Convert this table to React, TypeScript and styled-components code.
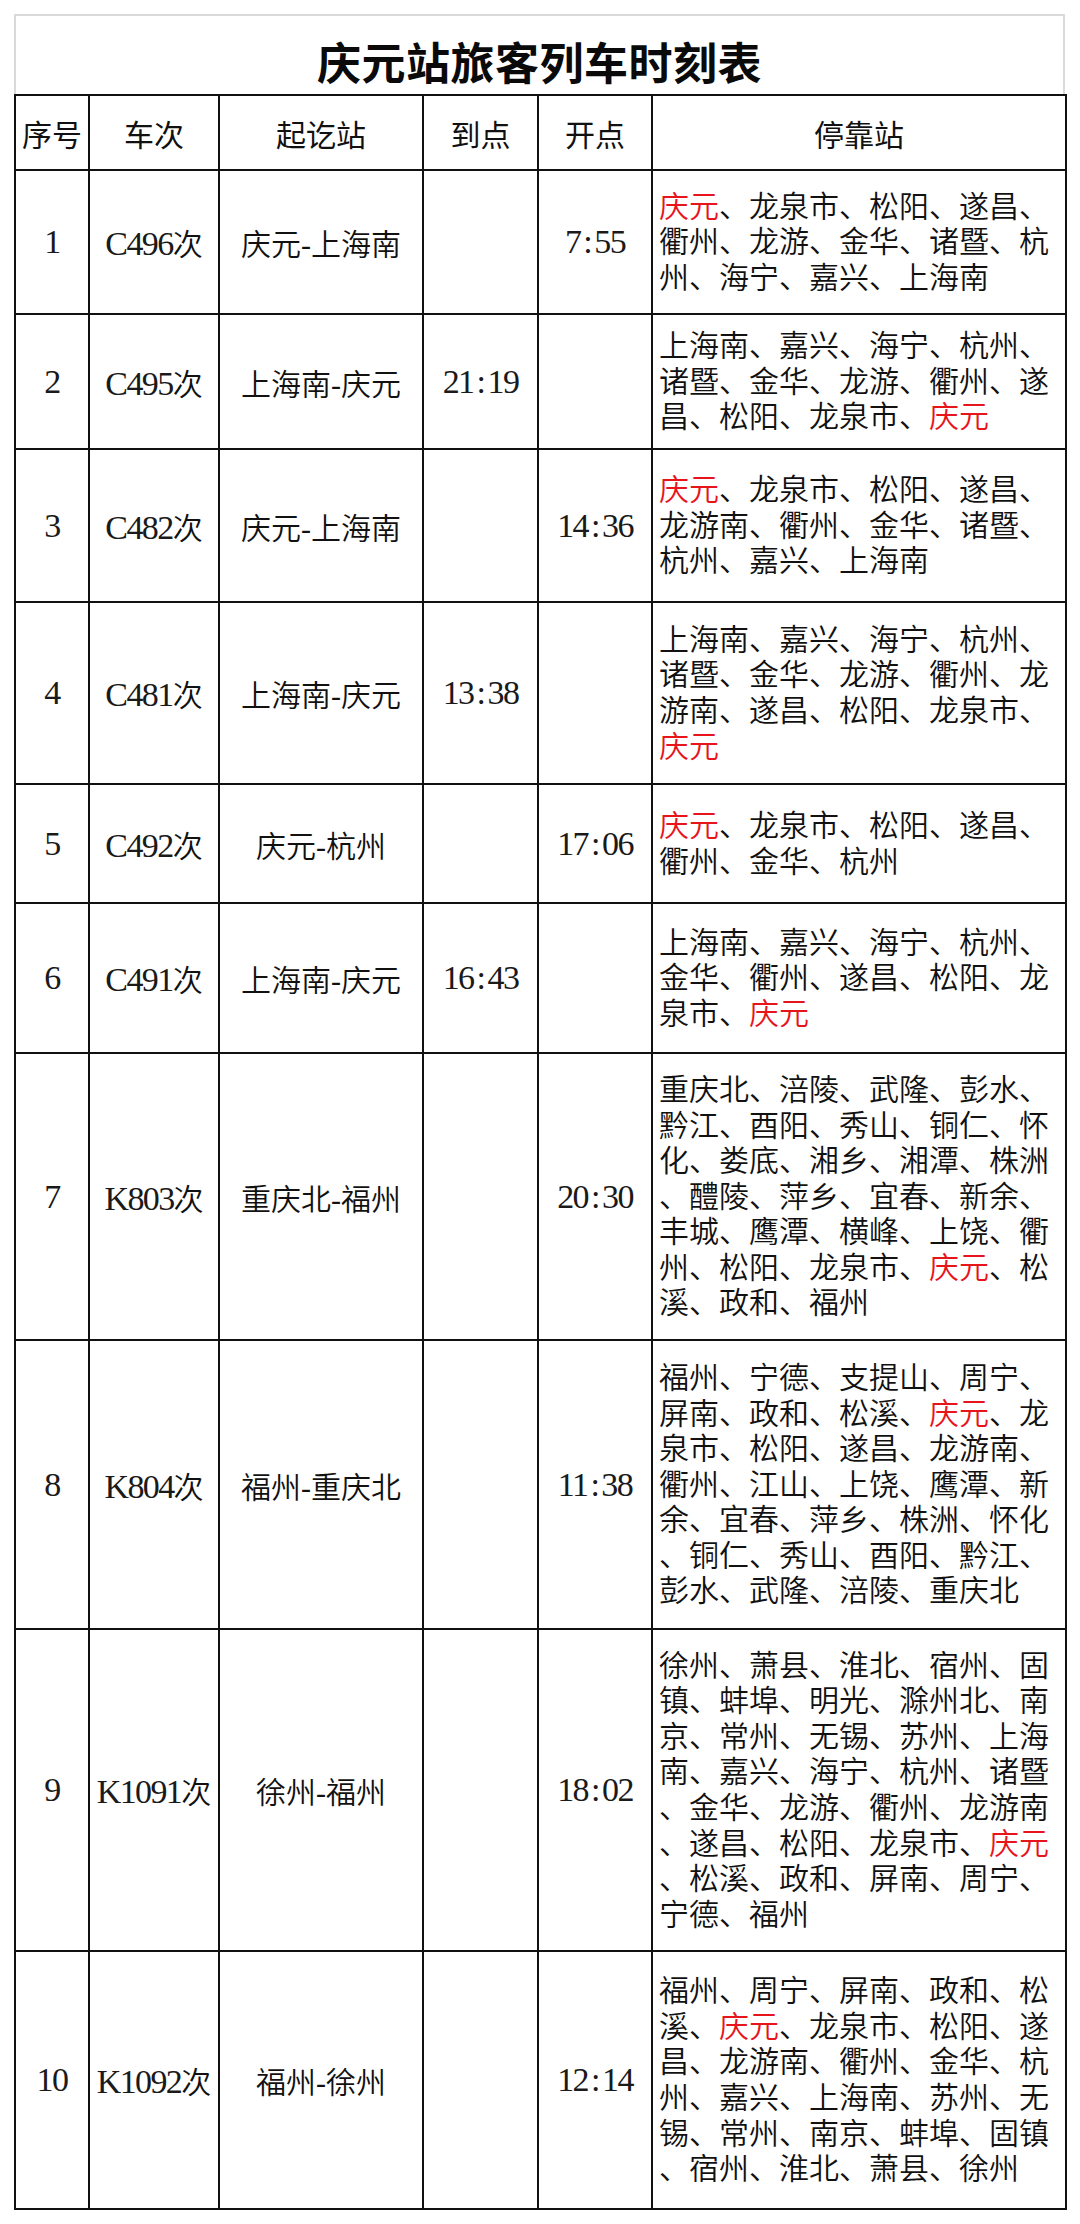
import React from 'react';
import styled, { createGlobalStyle } from 'styled-components';

const GlobalStyle = createGlobalStyle`
  html, body {
    margin: 0;
    padding: 0;
    background: #ffffff;
  }
  body {
    font-family: "Liberation Serif", "Noto Sans CJK SC", serif;
    color: #111111;
  }
`;

type Train = {
  no: number;
  code: string;
  route: string;
  arrive: string;
  depart: string;
  stops: string[];
  height: number;
};

const trains: Train[] = [
  {
    no: 1, code: 'C496', route: '庆元-上海南', arrive: '', depart: '7:55', height: 144,
    stops: ['庆元、龙泉市、松阳、遂昌、', '衢州、龙游、金华、诸暨、杭', '州、海宁、嘉兴、上海南'],
  },
  {
    no: 2, code: 'C495', route: '上海南-庆元', arrive: '21:19', depart: '', height: 135,
    stops: ['上海南、嘉兴、海宁、杭州、', '诸暨、金华、龙游、衢州、遂', '昌、松阳、龙泉市、庆元'],
  },
  {
    no: 3, code: 'C482', route: '庆元-上海南', arrive: '', depart: '14:36', height: 153,
    stops: ['庆元、龙泉市、松阳、遂昌、', '龙游南、衢州、金华、诸暨、', '杭州、嘉兴、上海南'],
  },
  {
    no: 4, code: 'C481', route: '上海南-庆元', arrive: '13:38', depart: '', height: 182,
    stops: ['上海南、嘉兴、海宁、杭州、', '诸暨、金华、龙游、衢州、龙', '游南、遂昌、松阳、龙泉市、', '庆元'],
  },
  {
    no: 5, code: 'C492', route: '庆元-杭州', arrive: '', depart: '17:06', height: 119,
    stops: ['庆元、龙泉市、松阳、遂昌、', '衢州、金华、杭州'],
  },
  {
    no: 6, code: 'C491', route: '上海南-庆元', arrive: '16:43', depart: '', height: 150,
    stops: ['上海南、嘉兴、海宁、杭州、', '金华、衢州、遂昌、松阳、龙', '泉市、庆元'],
  },
  {
    no: 7, code: 'K803', route: '重庆北-福州', arrive: '', depart: '20:30', height: 287,
    stops: [
      '重庆北、涪陵、武隆、彭水、', '黔江、酉阳、秀山、铜仁、怀', '化、娄底、湘乡、湘潭、株洲',
      '、醴陵、萍乡、宜春、新余、', '丰城、鹰潭、横峰、上饶、衢', '州、松阳、龙泉市、庆元、松',
      '溪、政和、福州',
    ],
  },
  {
    no: 8, code: 'K804', route: '福州-重庆北', arrive: '', depart: '11:38', height: 289,
    stops: [
      '福州、宁德、支提山、周宁、', '屏南、政和、松溪、庆元、龙', '泉市、松阳、遂昌、龙游南、',
      '衢州、江山、上饶、鹰潭、新', '余、宜春、萍乡、株洲、怀化', '、铜仁、秀山、酉阳、黔江、',
      '彭水、武隆、涪陵、重庆北',
    ],
  },
  {
    no: 9, code: 'K1091', route: '徐州-福州', arrive: '', depart: '18:02', height: 322,
    stops: [
      '徐州、萧县、淮北、宿州、固', '镇、蚌埠、明光、滁州北、南', '京、常州、无锡、苏州、上海',
      '南、嘉兴、海宁、杭州、诸暨', '、金华、龙游、衢州、龙游南', '、遂昌、松阳、龙泉市、庆元',
      '、松溪、政和、屏南、周宁、', '宁德、福州',
    ],
  },
  {
    no: 10, code: 'K1092', route: '福州-徐州', arrive: '', depart: '12:14', height: 258,
    stops: [
      '福州、周宁、屏南、政和、松', '溪、庆元、龙泉市、松阳、遂', '昌、龙游南、衢州、金华、杭',
      '州、嘉兴、上海南、苏州、无', '锡、常州、南京、蚌埠、固镇', '、宿州、淮北、萧县、徐州',
    ],
  },
];

const HOME = '庆元';

const Page = styled.div`
  padding: 14px 15px 16px 14px;
  width: 1051px;
`;

const TitleBar = styled.div`
  box-sizing: border-box;
  height: 80px;
  border: 2px solid #dadada;
  border-bottom: none;
  display: flex;
  align-items: center;
  justify-content: center;
  padding-top: 12px;
  font-family: "Noto Sans CJK SC", sans-serif;
  font-weight: 700;
  font-size: 44px;
  letter-spacing: 0.5px;
  color: #0a0a0a;
`;

const Table = styled.table`
  width: 1051px;
  table-layout: fixed;
  border-collapse: collapse;
  font-size: 30px;
  font-weight: 350;
`;

const Head = styled.th`
  border: 2px solid #111;
  font-weight: 400;
  text-align: center;
  vertical-align: middle;
  padding: 0;
  white-space: nowrap;
`;

const Cell = styled.td`
  border: 2px solid #111;
  text-align: center;
  vertical-align: middle;
  padding: 0;
  white-space: nowrap;
`;

const StopsCell = styled(Cell)`
  text-align: left;
  padding: 0 0 0 6px;
  line-height: 35.6px;
`;

const StopLine = styled.div`
  white-space: nowrap;
`;

const Home = styled.span`
  color: #e8141b;
`;

// SimSun-like latin: taller glyphs kept on a half-width pitch
const Latin = styled.span`
  font-family: "Liberation Serif", serif;
  font-size: 34px;
  font-weight: 400;
  letter-spacing: -1.6px;
  color: #1a1a1a;
`;

const Colon = styled.span`
  display: inline-block;
  width: 14px;
  text-align: center;
`;

const Time: React.FC<{ value: string }> = ({ value }) => {
  if (!value) return null;
  const [h, m] = value.split(':');
  return (
    <Latin>
      {h}
      <Colon>:</Colon>
      {m}
    </Latin>
  );
};

const Stops: React.FC<{ line: string }> = ({ line }) => {
  const parts = line.split(HOME);
  return (
    <StopLine>
      {parts.map((p, i) => (
        <React.Fragment key={i}>
          {i > 0 && <Home>{HOME}</Home>}
          {p}
        </React.Fragment>
      ))}
    </StopLine>
  );
};

const widths = [74, 130, 204, 115, 114, 414];

const App: React.FC = () => (
  <>
    <GlobalStyle />
    <Page>
      <TitleBar>庆元站旅客列车时刻表</TitleBar>
      <Table>
        <colgroup>
          {widths.map((w, i) => (
            <col key={i} style={{ width: w }} />
          ))}
        </colgroup>
        <thead>
          <tr style={{ height: 75 }}>
            <Head>序号</Head>
            <Head>车次</Head>
            <Head>起讫站</Head>
            <Head>到点</Head>
            <Head>开点</Head>
            <Head>停靠站</Head>
          </tr>
        </thead>
        <tbody>
          {trains.map((t) => (
            <tr key={t.no} style={{ height: t.height }}>
              <Cell>
                <Latin>{t.no}</Latin>
              </Cell>
              <Cell>
                <Latin>{t.code}</Latin>次
              </Cell>
              <Cell>{t.route}</Cell>
              <Cell>
                <Time value={t.arrive} />
              </Cell>
              <Cell>
                <Time value={t.depart} />
              </Cell>
              <StopsCell>
                {t.stops.map((line, i) => (
                  <Stops key={i} line={line} />
                ))}
              </StopsCell>
            </tr>
          ))}
        </tbody>
      </Table>
    </Page>
  </>
);

export default App;
